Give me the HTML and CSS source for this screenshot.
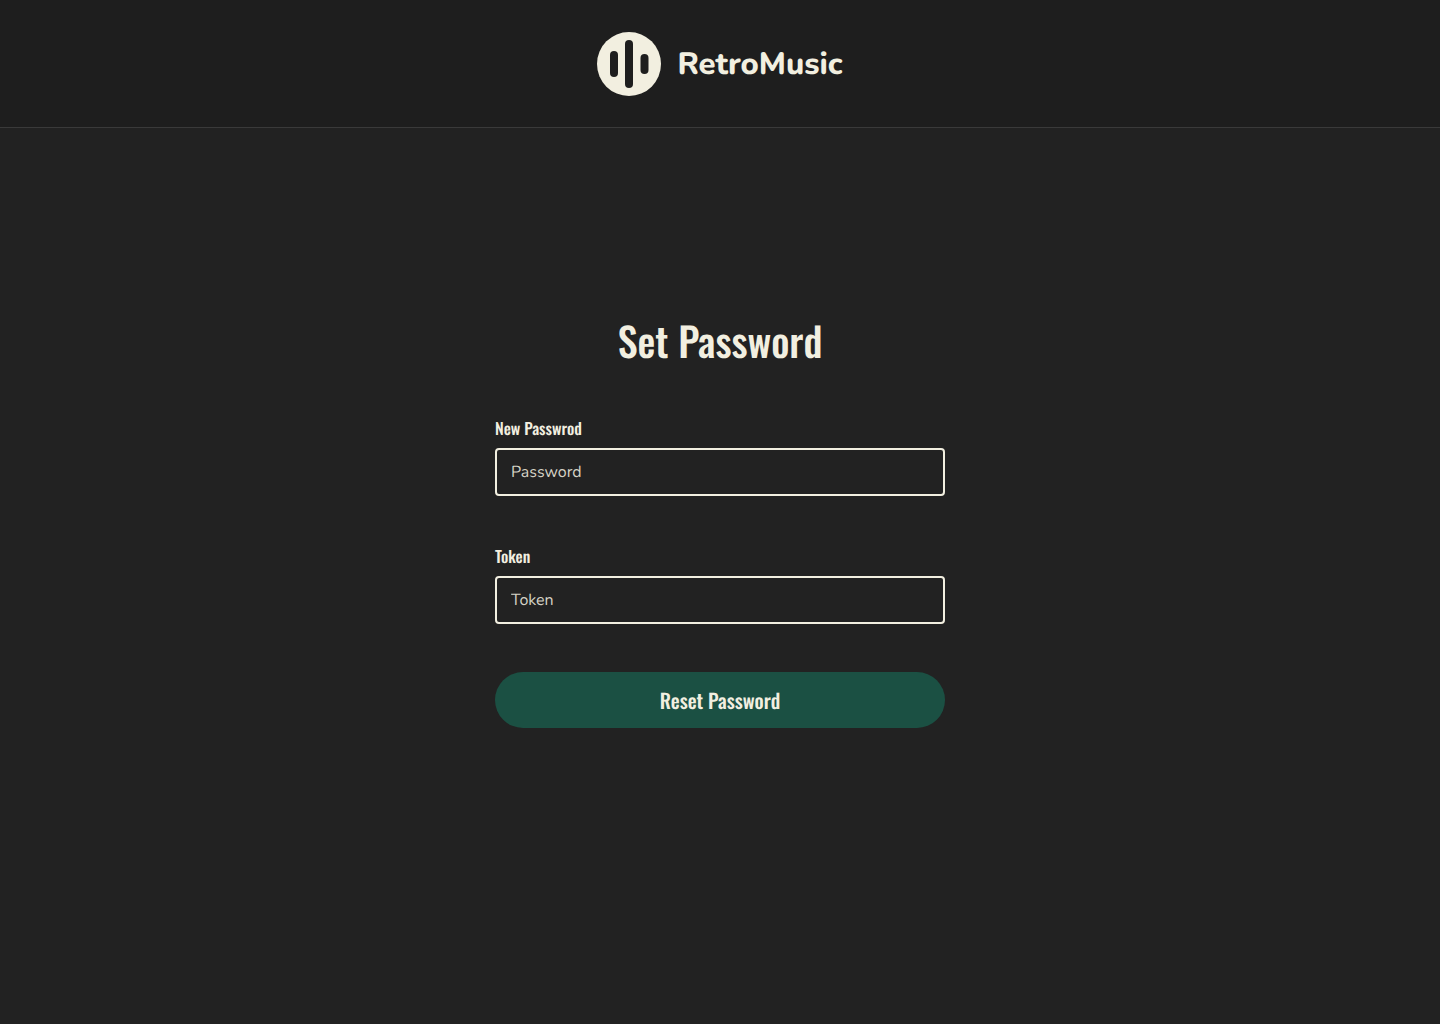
FILE: index.html
```html
<!DOCTYPE html>
<html lang="en">
<head>
  <meta charset="utf-8">
  <meta name="viewport" content="width=device-width, initial-scale=1">
  <title>RetroMusic – Set Password</title>
  <link rel="stylesheet" href="styles.css">
</head>
<body>
  <header class="header">
    <a class="brand" href="#">
      <svg class="brand-logo" viewBox="0 0 64 64" aria-hidden="true">
        <circle cx="32" cy="32" r="32" fill="#f2efe0"/>
        <g fill="#1e1e1e">
          <rect x="13" y="19" width="8" height="26" rx="4"/>
          <rect x="28" y="8" width="8" height="48" rx="4"/>
          <rect x="43.5" y="22" width="8" height="20" rx="4"/>
        </g>
      </svg>
      <span class="brand-name">RetroMusic</span>
    </a>
  </header>
  <main class="main">
    <form class="form">
      <h1 class="title">Set Password</h1>
      <div class="field">
        <label class="label" for="password">New Passwrod</label>
        <input class="input" id="password" type="password" placeholder="Password">
      </div>
      <div class="field">
        <label class="label" for="token">Token</label>
        <input class="input" id="token" type="text" placeholder="Token">
      </div>
      <button class="button" type="submit">Reset Password</button>
    </form>
  </main>
</body>
</html>
```

FILE: styles.css
```css
:root {
  --cream: #f2efe0;
  --heading-font: Oswald, "Liberation Sans Narrow", "Arial Narrow", sans-serif;
  --body-font: Nunito, "Open Sans", sans-serif;
}

* {
  box-sizing: border-box;
  text-rendering: geometricPrecision;
}

body {
  margin: 0;
  min-height: 100vh;
  display: flex;
  flex-direction: column;
  background: #222222;
  color: var(--cream);
  font-family: var(--body-font);
}

.header {
  display: flex;
  justify-content: center;
  padding: 32px 16px 31px;
  background: #1e1e1e;
  border-bottom: 1px solid #3a3a3a;
}

.brand {
  display: flex;
  align-items: center;
  gap: 16px;
  color: inherit;
  text-decoration: none;
}

.brand-logo {
  width: 64px;
  height: 64px;
}

.brand-name {
  font-size: 31px;
  line-height: 40px;
  font-weight: 800;
}

.main {
  flex: 1;
  display: flex;
  justify-content: center;
  align-items: flex-start;
  padding: 184px 16px 48px;
}

.form {
  width: 100%;
  max-width: 450px;
  display: flex;
  flex-direction: column;
  gap: 48px;
}

.title {
  margin: 0;
  font-family: var(--heading-font);
  font-size: 40px;
  line-height: 56px;
  font-weight: 500;
  text-align: center;
}

.field {
  display: flex;
  flex-direction: column;
  gap: 8px;
}

.label {
  font-family: var(--heading-font);
  font-size: 16px;
  line-height: 24px;
  font-weight: 500;
}

.input {
  width: 100%;
  height: 48px;
  padding: 0 14px;
  border: 2px solid var(--cream);
  border-radius: 4px;
  background: transparent;
  color: var(--cream);
  font-family: var(--body-font);
  font-size: 16px;
  font-weight: 400;
}

.input::placeholder {
  color: #d6d3c6;
  opacity: 1;
}

.button {
  height: 56px;
  border: 0;
  border-radius: 28px;
  background: #1b5043;
  color: var(--cream);
  font-family: var(--heading-font);
  font-size: 20px;
  line-height: 32px;
  font-weight: 500;
  cursor: pointer;
}
```
